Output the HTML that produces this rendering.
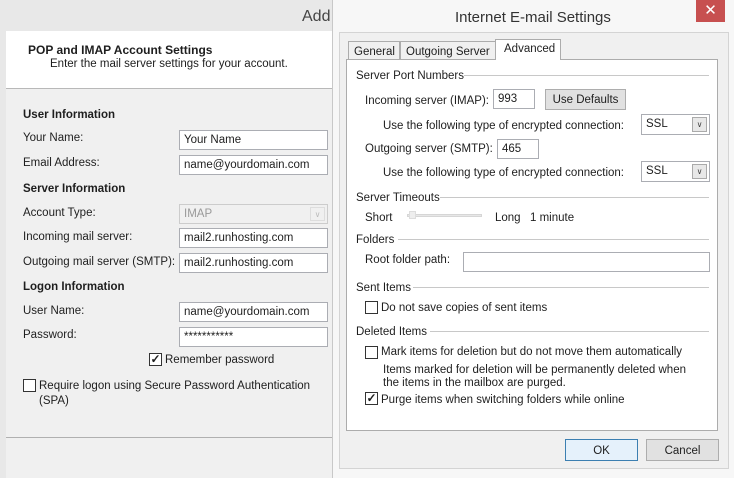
<!DOCTYPE html>
<html><head><style>
*{margin:0;padding:0;box-sizing:border-box}
body{width:734px;height:478px;overflow:hidden;background:#e8e8e8;font-family:"Liberation Sans",sans-serif;font-size:11.5px;color:#1e1e1e;position:relative}
.a{position:absolute;white-space:nowrap}
.t{margin-top:2px}
.in{position:absolute;background:#fff;border:1px solid #abadb3;padding:3px 0 0 4px;font-size:11.5px;white-space:nowrap}
.b{font-weight:bold}
.cb{position:absolute;width:13px;height:13px;border:1px solid #333;background:#fff;font-size:12px;line-height:11px;text-align:center;font-weight:bold}
.ln{position:absolute;height:1px;background:#c8c8c8}
.btn{position:absolute;border:1px solid #adadad;background:#e1e1e1;text-align:center}
.sel{position:absolute;background:#fff;border:1px solid #abadb3;padding:3px 0 0 4px}
.sel i{position:absolute;right:2px;top:2px;width:15px;height:15px;border:1px solid #aaa;background:#e8e8e8;font-style:normal;font-size:8px;text-align:center;line-height:14px;color:#444}
</style></head><body>
<div class="a t" style="left:302px;top:6px;font-size:16px;color:#444">Add</div>
<div class="a" style="left:6px;top:31px;width:327px;height:58px;background:#fff;border-bottom:1px solid #b8b8b8"></div>
<div class="a" style="left:6px;top:89px;width:327px;height:389px;background:#f0f0f0"></div>
<div class="a" style="left:6px;top:437px;width:327px;height:1px;background:#b0b0b0"></div>
<div class="a t b" style="left:28px;top:41px;font-size:12px">POP and IMAP Account Settings</div>
<div class="a t" style="left:50px;top:56px">Enter the mail server settings for your account.</div>
<div class="a t b" style="left:23px;top:107px">User Information</div>
<div class="a t" style="left:23px;top:130px">Your Name:</div>
<div class="a t" style="left:23px;top:155px">Email Address:</div>
<div class="a t b" style="left:23px;top:181px">Server Information</div>
<div class="a t" style="left:23px;top:205px">Account Type:</div>
<div class="a t" style="left:23px;top:229px">Incoming mail server:</div>
<div class="a t" style="left:23px;top:254px">Outgoing mail server (SMTP):</div>
<div class="a t b" style="left:23px;top:279px">Logon Information</div>
<div class="a t" style="left:23px;top:303px">User Name:</div>
<div class="a t" style="left:23px;top:327px">Password:</div>
<div class="in" style="left:179px;top:130px;width:149px;height:20px">Your Name</div>
<div class="in" style="left:179px;top:155px;width:149px;height:20px">name@yourdomain.com</div>
<div class="sel" style="left:179px;top:204px;width:149px;height:20px;background:#f0f0f0;border-color:#ccc;color:#999">IMAP<i style="border-color:#ddd;background:#f0f0f0;color:#bbb;height:14px">&#8744;</i></div>
<div class="in" style="left:179px;top:228px;width:149px;height:20px">mail2.runhosting.com</div>
<div class="in" style="left:179px;top:253px;width:149px;height:20px">mail2.runhosting.com</div>
<div class="in" style="left:179px;top:302px;width:149px;height:20px">name@yourdomain.com</div>
<div class="in" style="left:179px;top:327px;width:149px;height:20px">***********</div>
<div class="cb" style="left:149px;top:353px">&#10003;</div>
<div class="a t" style="left:165px;top:352px">Remember password</div>
<div class="cb" style="left:23px;top:379px"></div>
<div class="a t" style="left:39px;top:378px">Require logon using Secure Password Authentication</div>
<div class="a t" style="left:39px;top:393px">(SPA)</div>

<div class="a" style="left:332px;top:0;width:402px;height:478px;background:#f7f7f7;border-left:1px solid #c8c8c8"></div>
<div class="a t" style="left:455px;top:7px;font-size:15px;color:#333">Internet E-mail Settings</div>
<div class="a" style="left:696px;top:0;width:29px;height:22px;background:#c75050;color:#fff;text-align:center;font-size:15px;line-height:22px">&#10005;</div>
<div class="a" style="left:339px;top:32px;width:390px;height:437px;background:#f0f0f0;border:1px solid #d4d4d4"></div>
<div class="a" style="left:348px;top:41px;width:52px;height:19px;border:1px solid #acacac;background:#f0f0f0;padding:4px 0 0 5px">General</div>
<div class="a" style="left:400px;top:41px;width:96px;height:19px;border:1px solid #acacac;background:#f0f0f0;padding:4px 0 0 5px">Outgoing Server</div>
<div class="a" style="left:346px;top:59px;width:372px;height:372px;background:#fff;border:1px solid #acacac"></div>
<div class="a" style="left:495px;top:39px;width:66px;height:21px;border:1px solid #acacac;border-bottom:none;background:#fff;padding:3px 0 0 8px">Advanced</div>

<div class="a t" style="left:356px;top:68px">Server Port Numbers</div><div class="ln" style="left:464px;top:75px;width:245px"></div>
<div class="a t" style="left:365px;top:93px">Incoming server (IMAP):</div>
<div class="in" style="left:493px;top:89px;width:42px;height:20px">993</div>
<div class="btn" style="left:545px;top:89px;width:81px;height:21px;padding-top:4px">Use Defaults</div>
<div class="a t" style="left:383px;top:118px">Use the following type of encrypted connection:</div>
<div class="sel" style="left:641px;top:114px;width:69px;height:21px">SSL<i>&#8744;</i></div>
<div class="a t" style="left:365px;top:141px">Outgoing server (SMTP):</div>
<div class="in" style="left:497px;top:139px;width:42px;height:20px">465</div>
<div class="a t" style="left:383px;top:165px">Use the following type of encrypted connection:</div>
<div class="sel" style="left:641px;top:161px;width:69px;height:21px">SSL<i>&#8744;</i></div>
<div class="a t" style="left:356px;top:190px">Server Timeouts</div><div class="ln" style="left:440px;top:197px;width:269px"></div>
<div class="a t" style="left:365px;top:210px">Short</div>
<div class="a" style="left:407px;top:214px;width:75px;height:3px;background:#e7e7e7;border:1px solid #d6d6d6"></div>
<div class="a" style="left:409px;top:211px;width:7px;height:8px;background:#eee;border:1px solid #ddd"></div>
<div class="a t" style="left:495px;top:210px">Long</div>
<div class="a t" style="left:530px;top:210px">1 minute</div>
<div class="a t" style="left:356px;top:232px">Folders</div><div class="ln" style="left:398px;top:239px;width:311px"></div>
<div class="a t" style="left:365px;top:252px">Root folder path:</div>
<div class="in" style="left:463px;top:252px;width:247px;height:20px"></div>
<div class="a t" style="left:356px;top:280px">Sent Items</div><div class="ln" style="left:413px;top:287px;width:296px"></div>
<div class="cb" style="left:365px;top:301px"></div>
<div class="a t" style="left:381px;top:300px">Do not save copies of sent items</div>
<div class="a t" style="left:356px;top:324px">Deleted Items</div><div class="ln" style="left:430px;top:331px;width:279px"></div>
<div class="cb" style="left:365px;top:346px"></div>
<div class="a t" style="left:381px;top:344px">Mark items for deletion but do not move them automatically</div>
<div class="a t" style="left:383px;top:362px">Items marked for deletion will be permanently deleted when</div>
<div class="a t" style="left:383px;top:375px">the items in the mailbox are purged.</div>
<div class="cb" style="left:365px;top:392px">&#10003;</div>
<div class="a t" style="left:381px;top:392px">Purge items when switching folders while online</div>
<div class="btn" style="left:565px;top:439px;width:73px;height:22px;padding-top:5px;border-color:#3c7fb1;background:#e5f1fb">OK</div>
<div class="btn" style="left:646px;top:439px;width:73px;height:22px;padding-top:5px">Cancel</div>
</body></html>
